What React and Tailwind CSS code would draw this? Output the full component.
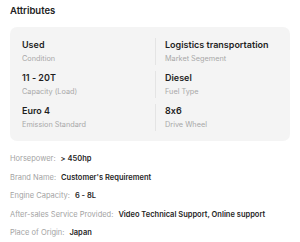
import React from "react";

const specs = [
  { value: "Used", label: "Condition" },
  { value: "Logistics transportation", label: "Market Segement" },
  { value: "11 - 20T", label: "Capacity (Load)" },
  { value: "Diesel", label: "Fuel Type" },
  { value: "Euro 4", label: "Emission Standard" },
  { value: "8x6", label: "Drive Wheel" },
];

const details = [
  { label: "Horsepower:", value: "> 450hp" },
  { label: "Brand Name:", value: "Customer's Requirement" },
  { label: "Engine Capacity:", value: "6 - 8L" },
  { label: "After-sales Service Provided:", value: "Video Technical Support, Online support" },
  { label: "Place of Origin:", value: "Japan" },
];

const App = () => {
  return (
    <div className="w-[300px] h-[242px] bg-white px-[10px] pt-[4px] font-['Inter',sans-serif] [font-feature-settings:'calt'_0] overflow-hidden">
      <h2 className="text-[9.5px] font-semibold text-[#222] leading-[14px]">Attributes</h2>

      {/* Spec card */}
      <div className="mt-[9px] bg-[#f4f4f4] rounded-[7px] pl-[12px] pr-[10px] pt-[11px] pb-[10px] grid grid-cols-[133px_1fr] gap-y-[6px]">
        {specs.map((item, index) => (
          <div
            key={index}
            className={index % 2 === 1 ? "border-l border-[#e4e4e4] pl-[9px]" : ""}
          >
            <div className="text-[9px] font-semibold text-[#1f1f1f] leading-[14px]">{item.value}</div>
            <div className="text-[7.3px] text-[#a8a8a8] leading-[13px]">{item.label}</div>
          </div>
        ))}
      </div>

      {/* Details list */}
      <div className="mt-[12px] flex flex-col gap-[6.5px]">
        {details.map((row, index) => (
          <div key={index} className="flex items-center text-[7.5px] leading-[12px]">
            <span className="text-[#a3a3a3]">{row.label}</span>
            <span className="ml-[5px] font-semibold text-[#1f1f1f]">{row.value}</span>
          </div>
        ))}
      </div>
    </div>
  );
};

export default App;
